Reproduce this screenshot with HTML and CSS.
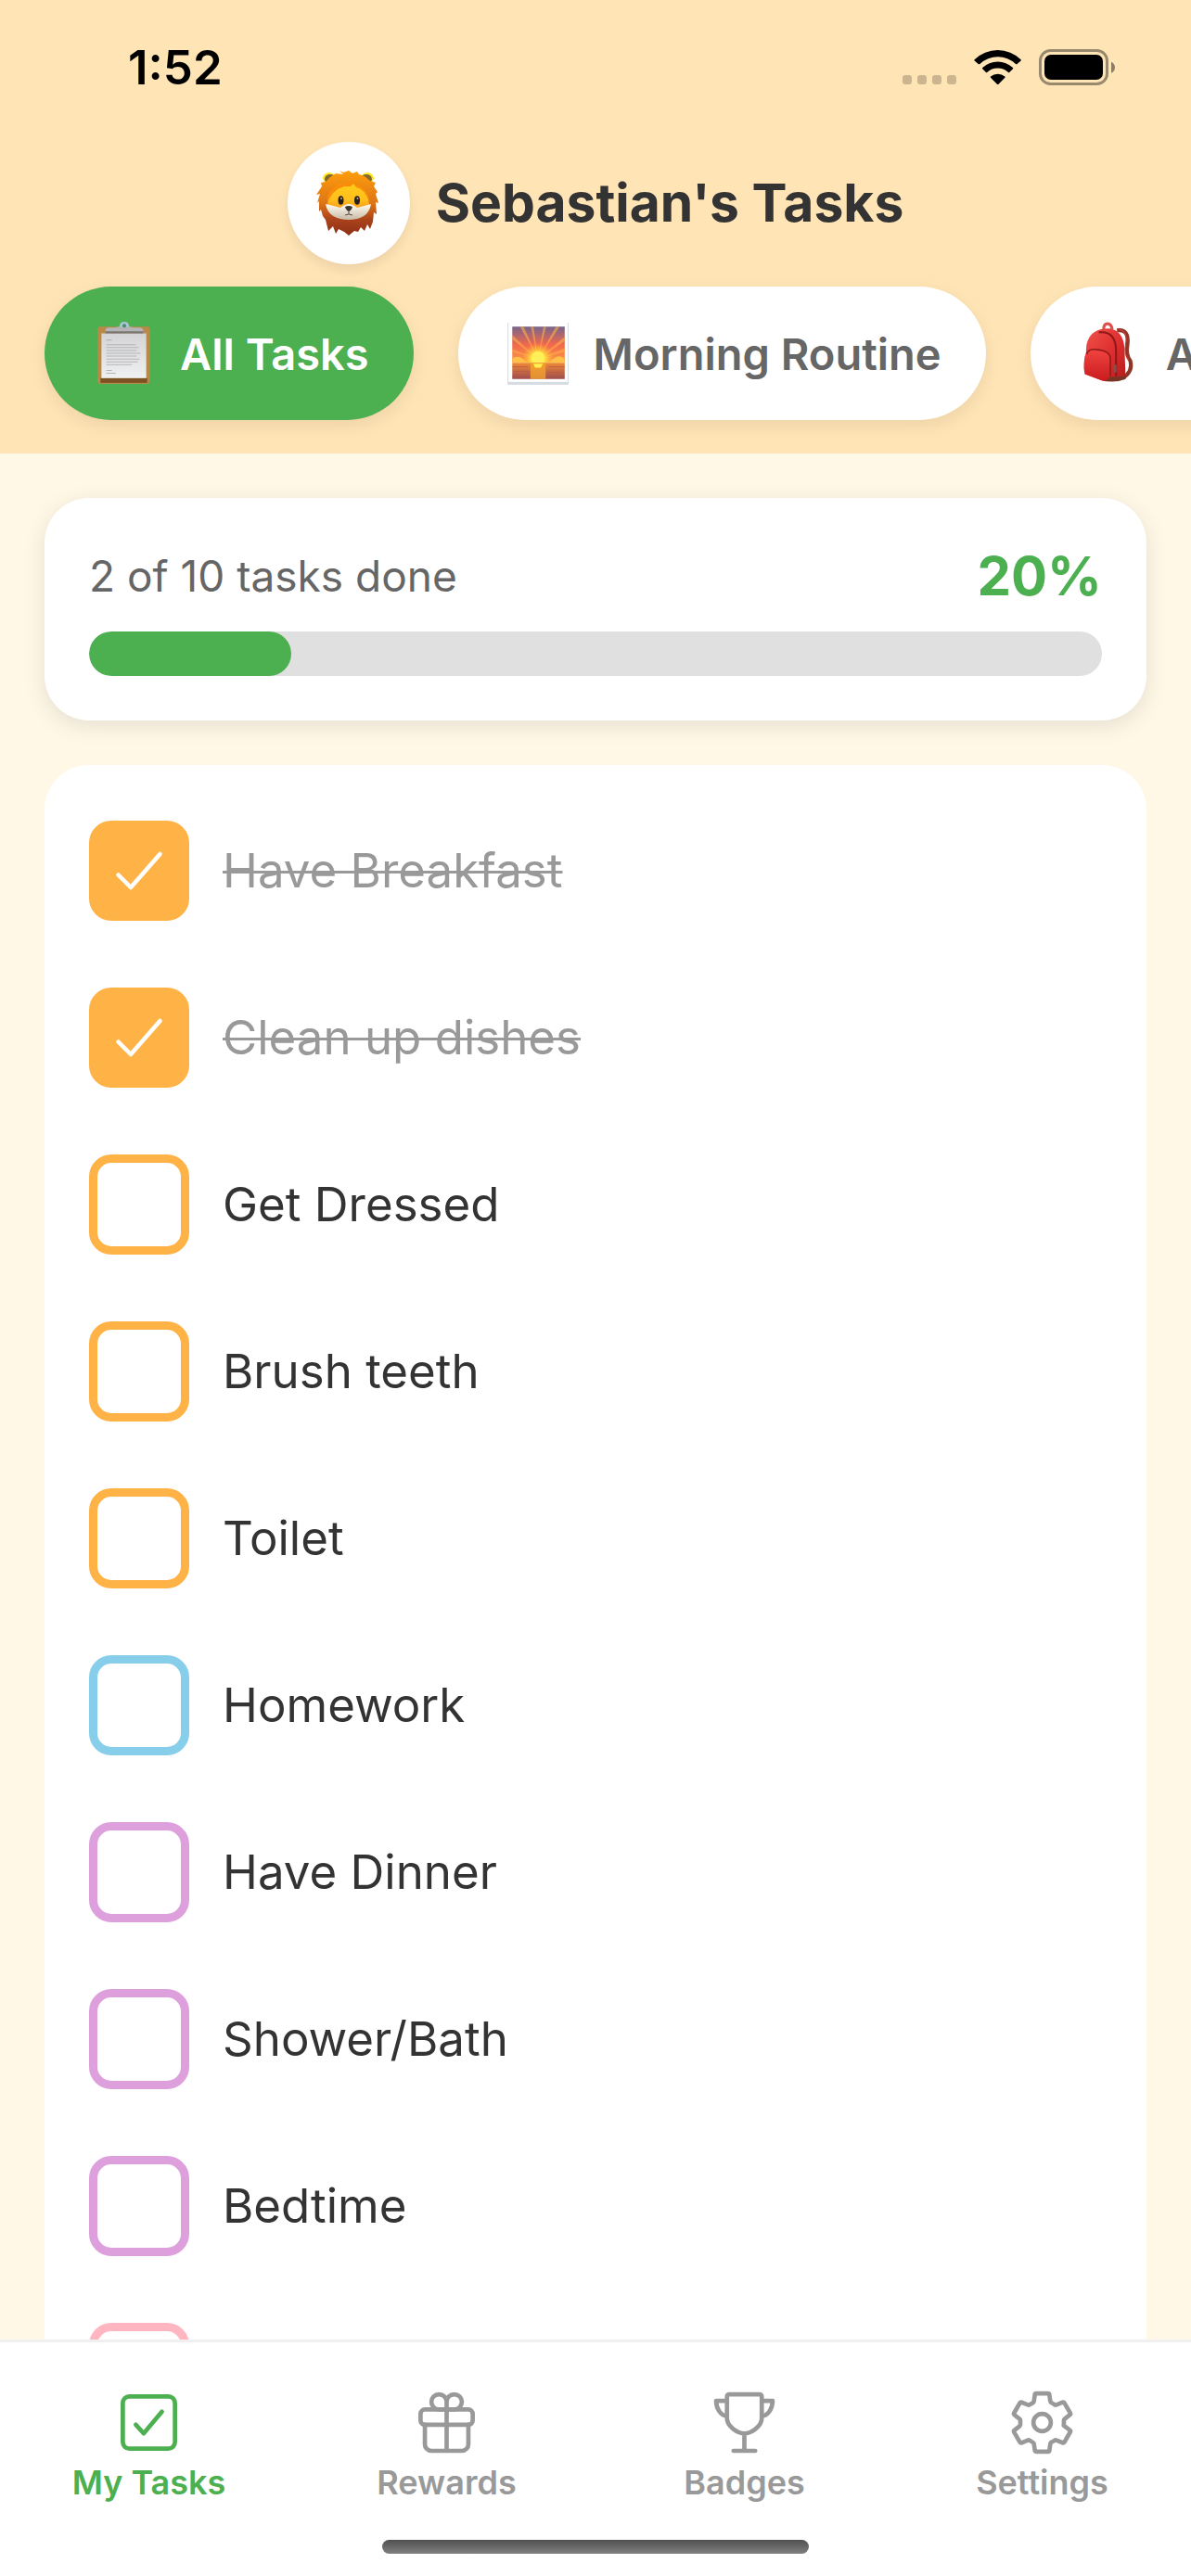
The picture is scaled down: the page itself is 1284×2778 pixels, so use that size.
FILE: index.html
```html
<!DOCTYPE html>
<html lang="en">
<head>
    <meta charset="UTF-8">
    <meta name="viewport" content="width=device-width, initial-scale=1.0">
    <title>Sebastian's Tasks</title>
    <link rel="stylesheet" href="styles.css">
</head>
<body>
    <header class="header">
        <div class="status-bar">
            <span class="time">1:52</span>
            <svg class="status-icons" viewBox="0 0 232 42" aria-hidden="true">
                <g opacity="0.2">
                    <rect x="3" y="29" width="10" height="10" rx="3"/>
                    <rect x="19" y="29" width="10" height="10" rx="3"/>
                    <rect x="35" y="29" width="10" height="10" rx="3"/>
                    <rect x="51" y="29" width="10" height="10" rx="3"/>
                </g>
                <path d="M80.6 12.2A36 36 0 0 1 130.6 12.2Q131.2 13 130.6 13.6L126.3 17.2Q125.6 17.6 125 17A28 28 0 0 0 86.4 17Q85.7 17.6 85 17.2L80.6 13.6Q80 13 80.6 12.2Z"/>
                <path d="M89.2 21A24 24 0 0 1 122 21Q122.5 21.6 122 22.2L118.2 26Q117.6 26.5 117 26A17 17 0 0 0 94.2 26Q93.6 26.5 93 26L89.2 22.2Q88.7 21.6 89.2 21Z"/>
                <path d="M98 30.6A12 12 0 0 1 113.4 30.6Q113.9 31.2 113.4 31.8L106.5 38.7Q105.7 39.4 104.9 38.7L98 31.8Q97.5 31.2 98 30.6Z"/>
                <rect x="151.500" y="2.500" width="72" height="36" rx="11" fill="none" stroke="#000" stroke-width="3" opacity="0.4"/>
                <rect x="156" y="7" width="63" height="27" rx="7"/>
                <path d="M228 14.700C233.300 16.500 233.300 25 228 26.700Z" opacity="0.45"/>
            </svg>
        </div>

        <div class="title-row">
            <div class="avatar">
                <svg viewBox="0 0 72 72" aria-hidden="true">
                    <defs>
                        <linearGradient id="mane" x1="0" y1="0" x2="0" y2="1">
                            <stop offset="0" stop-color="#ff9d0a"/>
                            <stop offset="0.5" stop-color="#dd7618"/>
                            <stop offset="0.75" stop-color="#ab431b"/>
                            <stop offset="1" stop-color="#8c2f16"/>
                        </linearGradient>
                        <linearGradient id="face" x1="0" y1="0" x2="0" y2="1">
                            <stop offset="0" stop-color="#ffce18"/>
                            <stop offset="0.5" stop-color="#ffbe1c"/>
                            <stop offset="1" stop-color="#f4791b"/>
                        </linearGradient>
                        <linearGradient id="muzzle" x1="0" y1="0" x2="0" y2="1">
                            <stop offset="0" stop-color="#fffdf3"/>
                            <stop offset="1" stop-color="#c9b9a5"/>
                        </linearGradient>
                    </defs>
                    <ellipse cx="15" cy="9" rx="7" ry="6" fill="#ffe82a"/>
                    <ellipse cx="56" cy="9" rx="7" ry="6" fill="#ffe82a"/>
                    <ellipse cx="16" cy="10" rx="6" ry="5" fill="#81682b"/>
                    <ellipse cx="55" cy="10" rx="6" ry="5" fill="#81682b"/>
                    <path fill="url(#mane)" d="M26 1L30 3L36 1L40 4L45 2L47 5L53 7L59 12L65 14L63 18L67 24L65 26L68 36L65 35L66 48L63 46L62 56L59 64L56 59L53 66L49 62L46 67L42 66L36 71L31 67L25 64L22 69L19 61L14 66L11 54L8 50L6 43L4 45L4 34L2 36L5 26L1 27L7 18L6 14L11 13L16 8L22 4L30 5Z"/>
                    <path fill="url(#face)" d="M35 14C22 15 14 24 13 37Q12 50 35 51Q59 50 58 37C56 24 49 16 35 14Z"/>
                    <path fill="url(#muzzle)" d="M11 37Q20 39 27 41Q32 37 36 37Q40 37 45 41Q53 39 60 37C58 49 49 54 36 54S13 49 11 37Z"/>
                    <path fill="#f98d0b" d="M13 36C12 23 22 17 29 15Q38 9 45 16Q57 21 59 36Q54 21 44 19L41 15L38 18L31 18Q18 22 13 36Z"/>
                    <ellipse cx="27.500" cy="33" rx="3" ry="4.800" fill="#28201a"/>
                    <ellipse cx="45" cy="33" rx="3" ry="4.800" fill="#28201a"/>
                    <circle cx="28" cy="31" r="1" fill="#c9b28c"/>
                    <circle cx="45.500" cy="31" r="1" fill="#c9b28c"/>
                    <path d="M32 40Q36 38 40 40Q39 44 36 45Q33 44 32 40Z" fill="#3d3531"/>
                    <path d="M36 44V48M32 49Q36 47 40 49" fill="none" stroke="#5a4a42" stroke-width="1"/>
                </svg>
            </div>
            <h1>Sebastian's Tasks</h1>
        </div>

        <div class="chips">
            <button type="button" class="chip active">
                <svg viewBox="0 0 72 72" aria-hidden="true">
                    <defs>
                        <linearGradient id="paper" x1="0" y1="0" x2="0" y2="1">
                            <stop offset="0" stop-color="#d4d4d6"/>
                            <stop offset="1" stop-color="#eff0f1"/>
                        </linearGradient>
                    </defs>
                    <rect x="9" y="8" width="55" height="60" rx="3" fill="#ba8847"/>
                    <rect x="12" y="62" width="49" height="5" fill="#7c5224"/>
                    <path d="M13 15H60V62H13Z" fill="url(#paper)"/>
                    <path d="M17 13Q17 9 21 9H52Q57 9 57 13V15H17Z" fill="#b5b5b7"/>
                    <path d="M17 14H57" stroke="#7a7673" stroke-width="2"/>
                    <path d="M27 9L32 8Q32 3 37 3T42 8L47 9Z" fill="#a9c4d2"/>
                    <circle cx="37" cy="7" r="2" fill="#4f8b72"/>
                    <path d="M18 22H24M18 27H49M18 30H52M18 33H50M18 36H54M18 39H50M18 42H53M18 45H51M18 48H45M18 54H24M18 57H28" stroke="#b5b5b8" stroke-width="1"/>
                </svg>
                All Tasks
            </button>
            <button type="button" class="chip">
                <svg viewBox="0 0 72 72" aria-hidden="true">
                    <defs>
                        <linearGradient id="sky" x1="0" y1="0" x2="0" y2="1">
                            <stop offset="0" stop-color="#77658a"/>
                            <stop offset="0.5" stop-color="#f2684d"/>
                            <stop offset="1" stop-color="#fb9a42"/>
                        </linearGradient>
                        <linearGradient id="sea" x1="0" y1="0" x2="0" y2="1">
                            <stop offset="0" stop-color="#ed8a35"/>
                            <stop offset="1" stop-color="#9f4d4e"/>
                        </linearGradient>
                        <radialGradient id="glow">
                            <stop offset="0" stop-color="#fff84f"/>
                            <stop offset="0.4" stop-color="#ffe33c"/>
                            <stop offset="1" stop-color="#ffb23a" stop-opacity="0"/>
                        </radialGradient>
                        <clipPath id="skyClip"><rect x="10" y="8" width="55" height="38"/></clipPath>
                    </defs>
                    <rect x="5" y="4" width="64" height="65" fill="#d5dde2"/>
                    <rect x="6" y="4" width="62" height="62" fill="#fff"/>
                    <rect x="10" y="8" width="55" height="38" fill="url(#sky)"/>
                    <g clip-path="url(#skyClip)">
                        <path d="M37 42L8 34V31ZM37 42L8 20V15ZM37 42L17 6H21ZM37 42L29 6H32ZM37 42L43 6H46ZM37 42L57 6H61ZM37 42L67 17V22ZM37 42L67 30V34Z" fill="#ffad48" opacity="0.6"/>
                        <path d="M10 42Q14 38 20 41L26 46H10ZM65 42Q60 37 54 41L48 46H65Z" fill="#ffc04a"/>
                        <circle cx="37" cy="42" r="17" fill="url(#glow)"/>
                        <circle cx="37" cy="41" r="7" fill="#fff05a"/>
                    </g>
                    <rect x="10" y="46" width="55" height="17" fill="url(#sea)"/>
                    <rect x="29" y="46" width="16" height="17" fill="#f7a72c" opacity="0.75"/>
                    <path d="M32 47H42L40 51H34Z" fill="#fff04c"/>
                    <path d="M10 50H26M48 50H65M12 55H28M47 56H62M10 60H24" stroke="#bd5145" stroke-width="1" opacity="0.6"/>
                </svg>
                Morning Routine
            </button>
            <button type="button" class="chip">
                <svg viewBox="0 0 72 72" aria-hidden="true">
                    <defs>
                        <linearGradient id="bag" x1="0" y1="0" x2="1" y2="1">
                            <stop offset="0" stop-color="#f0524c"/>
                            <stop offset="0.6" stop-color="#dc2b2c"/>
                            <stop offset="1" stop-color="#ad1d1c"/>
                        </linearGradient>
                        <linearGradient id="pocket" x1="0" y1="0" x2="0" y2="1">
                            <stop offset="0" stop-color="#f0423f"/>
                            <stop offset="1" stop-color="#c91c1e"/>
                        </linearGradient>
                    </defs>
                    <path d="M44 12Q57 10 55 27Q53 37 58 44Q61 55 50 62" fill="none" stroke="#8d3526" stroke-width="4"/>
                    <path d="M46 11Q56 13 53 26Q51 37 56 43" fill="none" stroke="#d33d33" stroke-width="1"/>
                    <path d="M30 11Q30 5 34 5T39 11" fill="none" stroke="#e0514c" stroke-width="3"/>
                    <path d="M12 27C15 14 24 10 35 10C49 11 52 24 52 34L53 61Q43 67 29 65L10 58Z" fill="url(#bag)"/>
                    <path d="M25 14Q43 12 43 34V60" fill="none" stroke="#8e1719" stroke-width="2"/>
                    <path d="M34 61L53 60V63Q44 67 31 65Z" fill="#763525"/>
                    <path d="M10 40Q12 32 20 33Q36 33 36 43V61Q34 66 27 64L11 58Q8 55 10 40Z" fill="url(#pocket)"/>
                    <path d="M12 37Q14 31 22 32Q38 33 37 43V60" fill="none" stroke="#931b1b" stroke-width="1.500"/>
                    <path d="M42 48V56" stroke="#785750" stroke-width="3"/>
                </svg>
                After School
            </button>
        </div>
    </header>

    <main class="content">
        <section class="card progress-card">
            <div class="progress-info">
                <span class="progress-text">2 of 10 tasks done</span>
                <span class="progress-percent">20%</span>
            </div>
            <div class="progress-bar" role="progressbar" aria-label="Tasks done" aria-valuenow="20" aria-valuemin="0" aria-valuemax="100">
                <div class="progress-fill" style="width: 20%"></div>
            </div>
        </section>

        <ul class="card task-list">
            <li class="task morning">
                <input type="checkbox" id="task-1" checked>
                <label for="task-1">Have Breakfast</label>
            </li>
            <li class="task morning">
                <input type="checkbox" id="task-2" checked>
                <label for="task-2">Clean up dishes</label>
            </li>
            <li class="task morning">
                <input type="checkbox" id="task-3">
                <label for="task-3">Get Dressed</label>
            </li>
            <li class="task morning">
                <input type="checkbox" id="task-4">
                <label for="task-4">Brush teeth</label>
            </li>
            <li class="task morning">
                <input type="checkbox" id="task-5">
                <label for="task-5">Toilet</label>
            </li>
            <li class="task afternoon">
                <input type="checkbox" id="task-6">
                <label for="task-6">Homework</label>
            </li>
            <li class="task evening">
                <input type="checkbox" id="task-7">
                <label for="task-7">Have Dinner</label>
            </li>
            <li class="task evening">
                <input type="checkbox" id="task-8">
                <label for="task-8">Shower/Bath</label>
            </li>
            <li class="task evening">
                <input type="checkbox" id="task-9">
                <label for="task-9">Bedtime</label>
            </li>
            <li class="task other">
                <input type="checkbox" id="task-10" aria-label="Task 10">
            </li>
        </ul>
    </main>

    <footer class="footer">
        <nav class="tabs">
            <a href="#tasks" class="tab active">
                <svg viewBox="0 0 512 512" aria-hidden="true">
                    <rect x="64" y="64" width="384" height="384" rx="48"/>
                    <path d="M352 176L217.600 336L160 272"/>
                </svg>
                My Tasks
            </a>
            <a href="#rewards" class="tab">
                <svg viewBox="0 0 512 512" aria-hidden="true">
                    <path d="M256 104v56h56a56 56 0 1 0-56-56zM256 104v56h-56a56 56 0 1 1 56-56z"/>
                    <rect x="64" y="160" width="384" height="112" rx="32"/>
                    <path d="M416 272v144a48 48 0 0 1-48 48H144a48 48 0 0 1-48-48V272M256 160v304"/>
                </svg>
                Rewards
            </a>
            <a href="#badges" class="tab">
                <svg viewBox="0 0 512 512" aria-hidden="true">
                    <path d="M176 464h160M256 464V336M384 224c0-50.640-.08-134.630-.12-160a16 16 0 0 0-16-16l-223.790.26a16 16 0 0 0-16 15.950c0 30.580-.13 129.170-.13 159.790 0 64.280 83 112 128 112S384 288.280 384 224z"/>
                    <path d="M128 96H48c0 55.220 33.550 112 80 112M384 96h80c0 55.220-33.550 112-80 112"/>
                </svg>
                Badges
            </a>
            <a href="#settings" class="tab">
                <svg viewBox="0 0 512 512" aria-hidden="true">
                    <circle cx="256" cy="256" r="64"/>
                    <path d="M416.390 256a154.340 154.340 0 0 1-1.530 20.790l45.210 35.460a10.810 10.810 0 0 1 2.450 13.750l-42.770 74a10.810 10.810 0 0 1-13.140 4.590l-44.900-18.080a16.110 16.110 0 0 0-15.170 1.750A164.480 164.480 0 0 1 325 400.800a15.940 15.940 0 0 0-8.820 12.140l-6.730 47.890a11.080 11.080 0 0 1-10.680 9.170h-85.540a11.110 11.110 0 0 1-10.690-8.870l-6.720-47.820a16.070 16.070 0 0 0-9-12.220 155.300 155.300 0 0 1-21.460-12.570 16 16 0 0 0-15.110-1.710l-44.890 18.070a10.810 10.810 0 0 1-13.140-4.580l-42.770-74a10.800 10.800 0 0 1 2.450-13.750l38.210-30a16.050 16.050 0 0 0 6-14.080c-.36-4.170-.58-8.330-.58-12.500s.21-8.270.58-12.350a16 16 0 0 0-6.070-13.940l-38.190-30A10.810 10.810 0 0 1 49.480 186l42.770-74a10.810 10.810 0 0 1 13.140-4.590l44.900 18.080a16.110 16.110 0 0 0 15.170-1.750A164.480 164.480 0 0 1 187 111.200a15.940 15.940 0 0 0 8.820-12.140l6.730-47.890A11.080 11.080 0 0 1 213.230 42h85.540a11.110 11.110 0 0 1 10.690 8.870l6.720 47.820a16.070 16.070 0 0 0 9 12.220 155.300 155.300 0 0 1 21.460 12.570 16 16 0 0 0 15.110 1.710l44.890-18.070a10.810 10.810 0 0 1 13.140 4.580l42.770 74a10.800 10.800 0 0 1-2.450 13.750l-38.210 30a16.050 16.050 0 0 0-6.050 14.080c.33 4.140.55 8.300.55 12.470z"/>
                </svg>
                Settings
            </a>
        </nav>
        <div class="home-indicator"></div>
    </footer>
</body>
</html>
```

FILE: styles.css
```css
* {
    margin: 0;
    padding: 0;
    box-sizing: border-box;
    font-family: Inter, 'Liberation Sans', sans-serif;
}

body {
    display: flex;
    flex-direction: column;
    height: 100vh;
    overflow: hidden;
    background: #fff8e7;
    color: #333;
}

/* Header */
.header {
    background: #ffe4b5;
}

.status-bar {
    display: flex;
    justify-content: space-between;
    align-items: center;
    padding: 43px 82px 38px 138px;
    margin-bottom: 12px;
}

.time {
    font-size: 51px;
    line-height: 60px;
    font-weight: 600;
    color: #000;
}

.status-icons {
    width: 232px;
    height: 42px;
}

.title-row {
    display: flex;
    justify-content: center;
    align-items: center;
    gap: 28px;
}

.avatar {
    display: flex;
    justify-content: center;
    align-items: center;
    width: 132px;
    height: 132px;
    border-radius: 50%;
    background: #fff;
    box-shadow: 0 6px 12px rgba(0, 0, 0, 0.08);
}

.avatar svg {
    width: 72px;
    height: 72px;
}

h1 {
    font-size: 57px;
    line-height: 72px;
    font-weight: 700;
}

/* Scrolls sideways when the routines don't fit */
.chips {
    display: flex;
    gap: 48px;
    padding: 24px 48px 36px;
    overflow-x: auto;
    scrollbar-width: none;
}

.chip {
    display: flex;
    flex-shrink: 0;
    align-items: center;
    gap: 24px;
    height: 144px;
    padding: 0 48px;
    border: none;
    border-radius: 72px;
    background: #fff;
    box-shadow: 0 6px 18px rgba(0, 0, 0, 0.08);
    color: #666;
    font-size: 47px;
    font-weight: 600;
    white-space: nowrap;
    cursor: pointer;
}

.chip svg {
    width: 74px;
    height: 74px;
}

.chip.active {
    background: #4caf50;
    color: #fff;
}

/* Content */
.content {
    flex: 1;
    min-height: 0;
    overflow: hidden;
    padding: 48px 48px 0;
}

.card {
    background: #fff;
    border-radius: 48px;
}

.progress-card {
    padding: 48px;
    margin-bottom: 48px;
    box-shadow: 0 6px 24px rgba(0, 0, 0, 0.1);
}

.progress-info {
    display: flex;
    justify-content: space-between;
    align-items: center;
    margin-bottom: 24px;
    line-height: 72px;
}

.progress-text {
    font-size: 46px;
    color: #666;
}

.progress-percent {
    font-size: 58px;
    font-weight: 700;
    color: #4caf50;
}

.progress-bar {
    height: 48px;
    border-radius: 24px;
    background: #e0e0e0;
    overflow: hidden;
}

.progress-fill {
    height: 100%;
    border-radius: 24px;
    background: #4caf50;
}

.task-list {
    list-style: none;
    padding: 24px 48px;
}

.task {
    display: flex;
    align-items: center;
    gap: 36px;
    padding: 36px 0;
    font-size: 51px;
    line-height: 72px;
}

.task input {
    appearance: none;
    flex-shrink: 0;
    width: 108px;
    height: 108px;
    border: 9px solid currentColor;
    border-radius: 24px;
    cursor: pointer;
}

.task input:checked {
    background: currentColor url("data:image/svg+xml,%3Csvg xmlns='http://www.w3.org/2000/svg' viewBox='0 0 512 512'%3E%3Cpath d='M416 128L192 384l-96-96' fill='none' stroke='white' stroke-width='32' stroke-linecap='round' stroke-linejoin='round'/%3E%3C/svg%3E") center / 72px no-repeat;
}

.task input:checked + label {
    color: #999;
    text-decoration: line-through;
    text-decoration-thickness: 3px;
}

.morning input {
    color: #ffb347;
}

.afternoon input {
    color: #87ceeb;
}

.evening input {
    color: #dda0dd;
}

.other input {
    color: #ffb6c1;
}

/* Bottom tabs */
.footer {
    background: #fff;
    border-top: 3px solid #f0f0f0;
    padding: 49px 0 24px;
}

.tabs {
    display: grid;
    grid-template-columns: repeat(4, 1fr);
    margin-bottom: 41px;
}

.tab {
    display: flex;
    flex-direction: column;
    align-items: center;
    gap: 6px;
    color: #999;
    font-size: 36px;
    line-height: 42px;
    font-weight: 600;
    text-decoration: none;
}

.tab.active {
    color: #4caf50;
}

.tab svg {
    width: 75px;
    height: 75px;
    fill: none;
    stroke: currentColor;
    stroke-width: 32;
    stroke-linecap: round;
    stroke-linejoin: round;
}

.home-indicator {
    width: 460px;
    height: 15px;
    margin: 0 auto;
    border-radius: 8px;
    background: linear-gradient(#505050, #808080);
}
```
